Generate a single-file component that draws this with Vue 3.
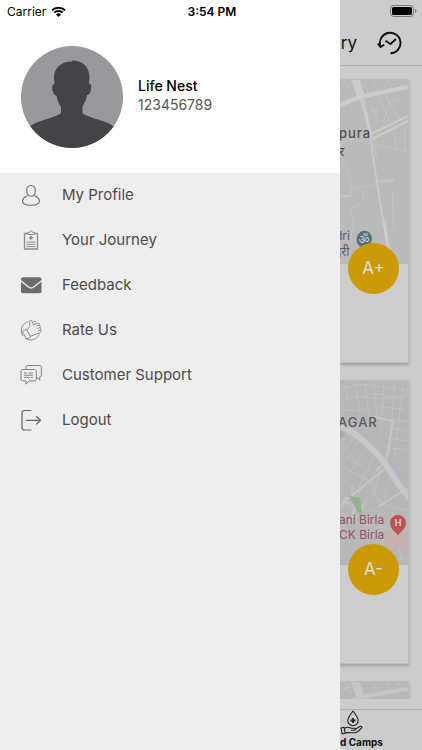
<script setup>
const menu = [
  { id: 'profile', label: 'My Profile' },
  { id: 'journey', label: 'Your Journey' },
  { id: 'feedback', label: 'Feedback' },
  { id: 'rate', label: 'Rate Us' },
  { id: 'support', label: 'Customer Support' },
  { id: 'logout', label: 'Logout' },
]
</script>

<template>
  <div class="screen">
    <div class="status">
      <span class="carrier">
        Carrier
        <svg class="wifi" viewBox="0 0 15 11" aria-hidden="true">
          <path d="M1 4.200a9.500 9.500 0 0 1 13 0M3.300 6.600a6.200 6.200 0 0 1 8.400 0" fill="none" stroke="#000" stroke-width="2" />
          <path d="M7.500 11 5 8.500a3.600 3.600 0 0 1 5 0z" />
        </svg>
      </span>
      <span class="time">3:54 PM</span>
      <svg class="battery" viewBox="0 0 27 12" aria-hidden="true">
        <rect x=".5" y=".5" width="23" height="11" rx="3" fill="none" stroke="#777" />
        <rect x="2" y="2" width="20" height="8" rx="1.500" />
        <path d="M25 4c2 .6 2 3.400 0 4z" fill="#777" />
      </svg>
    </div>

    <aside class="drawer">
      <header class="user">
        <svg class="avatar" viewBox="0 0 102 102" role="img" aria-label="Profile photo">
          <defs><clipPath id="face"><circle cx="51" cy="51" r="51" /></clipPath></defs>
          <g clip-path="url(#face)">
            <rect width="102" height="102" fill="#98999d" />
            <path fill="#434448" d="M51 14.500c12 0 18 8 17.500 18l-.5 5c3 0 2.500 5 1.500 8-.8 2.500-2 4-3.500 3.500-1 6-3 9-4.500 11.500V67c4 4 16 6 23 9 5 2 8 4 10 6V102H7V82c2-2 5-4 10-6 7-3 18-5 23-9v-6c-2-3-3.500-6-4.500-11.500-1.500.5-2.700-1-3.500-3.500-1-3-1.500-8 1.500-8l-.5-5c-.5-10 6-17.500 18-17.500z" />
          </g>
        </svg>
        <div class="who">
          <span class="name">Life Nest</span>
          <span class="phone">123456789</span>
        </div>
      </header>

      <nav class="menu">
        <a v-for="item in menu" :key="item.id" class="item" href="#">
          <svg class="icon" viewBox="0 0 22 22" aria-hidden="true">
            <g v-if="item.id === 'profile'" fill="none" stroke="#707070" stroke-width="1.100">
              <path d="M11 1.500c-3 0-4.400 2-4.300 4.700.1 3.300 1.700 6 4.300 6s4.200-2.700 4.300-6C15.400 3.500 14 1.500 11 1.500z" />
              <path d="M7.500 11.800c-2.500 1.400-5 1.700-5 5.200 0 2.600 3.500 4.200 8.500 4.200s8.500-1.600 8.500-4.200c0-3.500-2.500-3.800-5-5.200" />
            </g>
            <g v-else-if="item.id === 'journey'" fill="none" stroke="#8c8c8c">
              <path d="M4.500 4.500h13v15.500h-13z" stroke-width="1.300" />
              <path d="M7.500 5.500v-2h1.800c.2-2 3.200-2 3.400 0h1.800v2z" fill="#eee" />
              <path d="M11 6.800v4M9 8.800h4" stroke-width="1.600" />
              <path d="M6.500 13h9M6.500 15.300h9M6.500 17.600h9" />
            </g>
            <g v-else-if="item.id === 'feedback'">
              <rect x="1" y="3.200" width="20.500" height="16" rx="2" fill="#6c6c6c" />
              <path d="M.5 6.500 8.500 13c1.700 1.300 3.500 1.300 5.200 0L22 6.500" fill="none" stroke="#eee" stroke-width="1.300" />
            </g>
            <g v-else-if="item.id === 'rate'" fill="none" stroke="#858585" stroke-width=".9" stroke-linejoin="round">
              <path d="M8 2.700A9.300 9.300 0 0 0 3 17M5 18.900a9.300 9.300 0 0 0 14.500-4.200M20.200 11.500v-1M13.500 2.100l2.500.9" />
              <path d="m2.200 12.300 4.200-2 4.200 7.500-4 2.300zM6.500 10.800c1.800-1.400 3.300-2.600 3.500-4.500L9.300 2.700c.8-1.900 2.700-1.400 3 .1l1.200 3.100 4.100-1.700c1.700-.4 2.300 1.300 1.200 2.100 1.700-.1 2.300 1.600.9 2.400 1.600.2 1.800 1.800.5 2.500 1.300.5 1 2.100-.4 2.600l-4.600 1.700-5 1.800" />
              <path d="m16.500 7 2.300-.8M17.300 9.500l2.400-.8M18 12l2-.8" />
            </g>
            <g v-else-if="item.id === 'support'" fill="none" stroke="#777" stroke-width=".9" stroke-linejoin="round">
              <path d="M6 5.300V3.200C6 2.100 6.600 1.500 7.700 1.500h12c1.100 0 1.700.6 1.700 1.700v8c0 1.100-.6 1.700-1.700 1.700v3.300l-3-3" />
              <path d="M2.700 5.500h11.900c1.100 0 1.700.6 1.700 1.700v8c0 1.100-.6 1.700-1.700 1.700H9L6 20.200v-3.300H2.700C1.600 16.900 1 16.300 1 15.200v-8c0-1.100.6-1.700 1.700-1.700z" />
              <path d="M4 9h3M8.500 9h4.500M4 11.200h9M4 13.400h5.500M11 13.400h2" />
            </g>
            <g v-else fill="none" stroke="#666" stroke-width="1.200" stroke-linecap="round" stroke-linejoin="round">
              <path d="M11 1.500H4.500c-1.700 0-2.500.8-2.500 2.500v14.500C2 20.200 2.800 21 4.500 21H11M6.500 11.300h14M16.500 7.500l4 3.800-4 3.800" />
            </g>
          </svg>
          {{ item.label }}
        </a>
      </nav>
    </aside>

    <main class="behind">
      <header class="bar">
        <h1 class="title">ory</h1>
        <button class="history" type="button" aria-label="Recent">
          <svg viewBox="0 0 26 24" aria-hidden="true" fill="none" stroke="#111" stroke-width="1.900">
            <path d="M3.500 15.500A10.300 10.300 0 1 1 13.500 22.300" />
            <path d="m.8 12.500 2.700 3.500 3.700-2.300" />
            <path d="m8.500 9.800 5 3.200 5.500-5" />
          </svg>
        </button>
      </header>

      <section class="feed">
        <article class="card">
          <svg class="map" viewBox="0 0 68 184" preserveAspectRatio="xMinYMin slice">
            <rect width="68" height="184" fill="#bbbab9" />
            <g fill="none" stroke="#c6c6c6">
              <path d="M0 9 14 3M5 0l6 12M33 1l8 17M47 0l9 16M58 0l7 12M22 3l8 12M37 14l13 28M44 12l14 25M30 20l8 20-8 10M26 33l12-3M43 43l6-20 14-5M0 65l12-6 15 4 40 8M12 60 0 75M55 48v22M65 45v28M50 50l8 12M33 64l4 15M0 118l10-2M13 109l21-5M20 112v-5M2 80l8 18 1 18M24 110l-2 12-12 8 4 10-4 22M39 100h16M52 108l2 45" stroke-width=".8" />
              <path d="M37 101h17" stroke-width="1.500" />
              <path d="M0 116h10" stroke-width="2" />
            </g>
            <g fill="none" stroke="#cbcccd">
              <path d="m15-2 6 19" stroke-width="8" />
              <path d="M0 26C12 18 28 15 68 7" stroke-width="4" />
              <path d="M31 54 68 36M32 59l36-18" stroke-width="2" />
              <path d="M20 18c5 15 8 25 10 40l13 82c2 14 4 30 8 44M23 18l9 40M45 140c1 16 4 28 8 44" stroke-width="1.600" />
            </g>
            <g fill="#4b5059" font-size="13">
              <text class="area" x="-1" y="58">pura</text>
              <text class="hindi" x="-1" y="76">र</text>
            </g>
            <g fill="#54626b" font-size="12">
              <text x="-5" y="160">dri</text>
              <text class="hindi" x="-5" y="176">दरी</text>
            </g>
            <path d="M17 158a7.500 7.500 0 1 1 14 4l-7 8-6-8z" fill="#56727f" />
            <circle cx="24" cy="160" r="7.500" fill="#56727f" />
            <text class="hindi" x="24" y="164" font-size="12" text-anchor="middle" fill="#ccc">ॐ</text>
          </svg>
          <span class="group">A+</span>
        </article>

        <article class="card">
          <svg class="map" viewBox="0 0 68 184" preserveAspectRatio="xMinYMin slice">
            <rect width="68" height="184" fill="#b7b7b7" />
            <g fill="none" stroke="#c4c4c4" stroke-width=".8">
              <path d="M0 8l20-5 48 6M0 20l18-5 20 3 30-4M5 0l4 30M15 0l5 32M25 2l4 35M34 3l3 34M44 2l-4 60M55 1l-6 74M63 5l-9 74M0 30l32-2M30 12l34 6M32 24l34 5M52 38l16 3M50 47l18 3M47 57l21 3M45 66l23 3M15 55 0 76M28 62 10 92M37 68 18 108M5 75l30 18M2 86l34 18M0 98l20 14" />
              <path d="M12 48 0 64M20 57 4 82M0 116l14 12 18 2M25 96l16 26 27 8M41 88l-9 32M49 98l-9 40M28 116 14 140M0 136l22 8 46 6M38 130l8 54M52 128l9 50M26 135l5 49M4 142l6 20M28 152l40-7M32 168l36-8M35 178h33" />
              <path d="M12 105v12h-8M0 126c6-8 12-4 14-1s8 4 12-4" stroke-width="1.500" />
            </g>
            <path d="M34 36l19 4-7 40-10 10M2 122l12-9 32-26M38 126l22-14 8-4M14 128l-2 14" fill="none" stroke="#c5c6c6" stroke-width="2" />
            <path d="M-3 42C22 56 40 74 50 90c8 14 12 18 20 28" fill="none" stroke="#c6c7c8" stroke-width="6" />
            <path d="m54 77 13 4-8 14-7-7z" fill="#b5b9bf" />
            <path d="M0 50l5 3-5 5z" fill="#94b290" />
            <path d="m9 115 11 2 2 18-4-4z" fill="#92b28f" />
            <path d="M45 153h23v14H45z" fill="#c8b0ad" />
            <text class="area" x="-2" y="46" font-size="13" fill="#555c66">AGAR</text>
            <g font-size="12" fill="#98505a">
              <text x="-1" y="143">ani Birla</text>
              <text x="-1" y="158">CK Birla</text>
            </g>
            <path d="M58 155c-1-4-8-6-8-13a8 8 0 0 1 16 0c0 7-7 9-8 13z" fill="#bd5351" />
            <text x="58" y="145" font-size="9" font-weight="700" text-anchor="middle" fill="#ccc">H</text>
          </svg>
          <span class="group">A-</span>
        </article>

        <article class="card">
          <svg class="map" viewBox="0 0 68 184" preserveAspectRatio="xMinYMin slice">
            <rect width="68" height="184" fill="#bbb9b8" />
            <path d="m15-2 7 22" stroke="#c6c6c6" stroke-width="8" />
            <path d="M0 24C15 16 28 13 68 7" fill="none" stroke="#c6c6c6" stroke-width="4" />
            <path d="M0 9 14 3M5 0l6 12M33 1l5 12M47 0l4 10M58 0l5 8" fill="none" stroke="#c6c6c6" />
          </svg>
        </article>
      </section>

      <footer class="tabs">
        <a class="tab" href="#">
          <svg viewBox="0 0 24 25" aria-hidden="true" fill="none" stroke="#222" stroke-width="1.100" stroke-linejoin="round">
            <path d="M13 1c2.300 3.500 5.200 6.500 5.200 9.500a5.200 5.200 0 0 1-10.400 0C7.800 7.500 10.700 4.500 13 1z" />
            <path d="M13 8v5M10.500 10.500h5" stroke-width="1.800" />
            <path d="m1 18 3-.8 1.200 6L2.200 24zM4.300 18.500c3-2 5-1.500 7-.3h3.200c1.300.2 1.300 1.800 0 2H11M14.800 19.500l5.500-3.200c1.400-.4 2.100.7 1.300 1.600-2 2.300-4 4.300-6.600 4.800-3.500.5-6-.6-9.800.2" />
          </svg>
          d Camps
        </a>
      </footer>
    </main>
  </div>
</template>

<style>
body {
  margin: 0;
  background: #ccc;
}
</style>

<style scoped>
.screen {
  position: relative;
  display: flex;
  height: 100vh;
  overflow: hidden;
  font-family: Inter, "Noto Sans", sans-serif;
  background: #ccc;
}
.status {
  position: absolute;
  inset: 0 0 auto;
  z-index: 3;
  display: grid;
  grid-template-columns: 1fr auto 1fr;
  align-items: center;
  height: 22px;
  padding: 0 5px 0 7px;
  font-size: 12px;
  color: #000;
}
.carrier {
  display: flex;
  align-items: center;
  gap: 5px;
}
.wifi {
  width: 15px;
  height: 11px;
}
.time {
  font-weight: 600;
}
.battery {
  width: 27px;
  height: 12px;
  justify-self: end;
}
.drawer {
  flex: 0 0 340px;
  z-index: 2;
  background: #eee;
}
.user {
  display: flex;
  align-items: center;
  gap: 15px;
  box-sizing: border-box;
  height: 173px;
  padding: 20px 21px 0;
  background: #fff;
}
.avatar {
  width: 102px;
  height: 102px;
}
.who {
  display: flex;
  flex-direction: column;
  padding-bottom: 4px;
  font-size: 14px;
  line-height: 19px;
}
.name {
  font-weight: 500;
  color: #000;
}
.phone {
  color: #555;
}
.menu {
  display: flex;
  flex-direction: column;
}
.item {
  display: flex;
  align-items: center;
  gap: 20px;
  box-sizing: border-box;
  height: 45px;
  padding: 0 20px 2px;
  font-size: 15px;
  color: #4c4c4c;
  text-decoration: none;
}
.icon {
  width: 22px;
  height: 22px;
}
.behind {
  flex: 1;
  min-width: 0;
  display: flex;
  flex-direction: column;
}
.bar {
  display: flex;
  align-items: center;
  justify-content: flex-end;
  gap: 20px;
  box-sizing: border-box;
  height: 66px;
  padding: 20px 19px 0 0;
  border-bottom: 1px solid #b0b0b0;
}
.title {
  margin: 0;
  font-size: 17px;
  font-weight: 400;
  color: #111;
}
.history {
  padding: 0;
  border: 0;
  background: none;
}
.history svg {
  display: block;
  width: 26px;
  height: 24px;
}
.feed {
  flex: 1;
  min-height: 0;
  overflow: hidden;
  display: flex;
  flex-direction: column;
  gap: 17px;
  padding: 13px 13px 0 0;
  margin-bottom: 10px;
}
.card {
  flex: none;
  display: flex;
  flex-direction: column;
  box-sizing: border-box;
  height: 284px;
  border: 1px solid #bdbdbd;
  border-left: 0;
  background: #cdcdcd;
  box-shadow: 0 2px 3px rgba(0, 0, 0, 0.22);
}
.map {
  display: block;
  width: 100%;
  height: 184px;
}
.area {
  font-weight: 500;
  letter-spacing: 1px;
}
.hindi {
  font-family: "Noto Sans", "Noto Sans Devanagari", sans-serif;
}
.group {
  align-self: flex-end;
  z-index: 1;
  width: 51px;
  margin: -21px 9px 0 0;
  border-radius: 50%;
  background: #cc9a06;
  color: #ddd;
  font-size: 17px;
  font-weight: 400;
  line-height: 51px;
  text-align: center;
}
.tabs {
  display: flex;
  box-sizing: border-box;
  height: 41px;
  border-top: 1px solid #b0b0b0;
}
.tab {
  display: flex;
  flex-direction: column;
  font-size: 10px;
  font-weight: 700;
  line-height: 14px;
  color: #111;
  text-decoration: none;
  white-space: nowrap;
}
.tab svg {
  width: 24px;
  height: 25px;
}
</style>
